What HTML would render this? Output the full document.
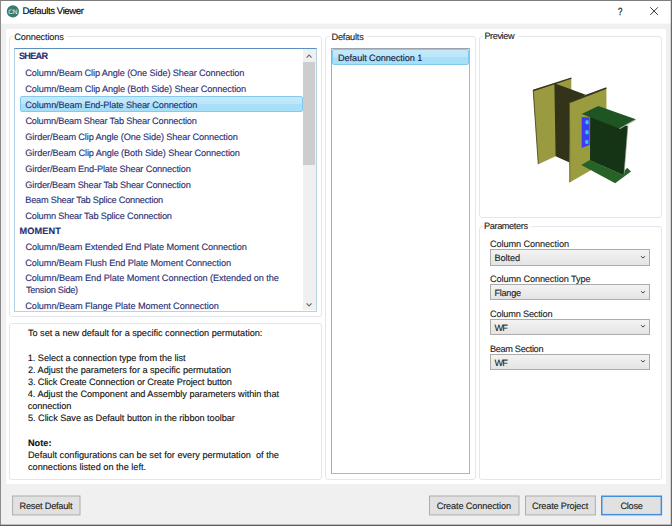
<!DOCTYPE html>
<html lang="en"><head><meta charset="utf-8"><title>Defaults Viewer</title>
<style>
html,body{margin:0;padding:0}
body{width:672px;height:526px;overflow:hidden;background:#f0f0f0;position:relative;font-family:"Liberation Sans", Arial, sans-serif;font-size:9.2px;line-height:12px;text-rendering:geometricPrecision}
.abs,.t,.gb,.btn,.cb{position:absolute;box-sizing:border-box}
.t{white-space:pre;line-height:12px;-webkit-text-stroke:0.12px currentColor}
.gb{border:1px solid #e1e7ed;border-radius:3px}
.lbl{position:absolute;background:#fff;height:3px}
.btn{background:#e1e1e1;border:1px solid #adadad}
.cb{border:1px solid #acacac;background:linear-gradient(#f3f3f3,#e4e4e4)}
.sel{border:1px solid #84c9ee;border-radius:2px;background:linear-gradient(#c4e9fb 0%,#bde6fa 48%,#a9e0f9 52%,#a6dff8 100%)}
</style></head><body>
<div class="abs" style="left:0;top:0;width:672px;height:23px;background:#fff"></div>
<svg class="abs" style="left:0;top:0" width="672" height="526" viewBox="0 0 672 526"><rect x="0" y="23" width="672" height="0.6" fill="#fff"/><rect x="0" y="0" width="672" height="1" fill="#7d7d7d"/><rect x="0" y="0" width="0.95" height="526" fill="#858585"/><rect x="670.7" y="0" width="1.3" height="526" fill="#8a8a8a"/><rect x="671.2" y="0" width="0.8" height="526" fill="#5e5e5e"/><rect x="0" y="524.5" width="672" height="1.5" fill="#8a8a8a"/><rect x="0" y="525" width="672" height="1" fill="#5e5e5e"/><circle cx="12.9" cy="11.4" r="6.1" fill="#3a7b70"/><text x="12.8" y="13.8" font-size="6.6" text-anchor="middle" fill="#eef6f3" font-family="Liberation Sans, sans-serif" letter-spacing="-0.2">CN</text><path d="M650.3 7.3 L657.9 14.9 M657.9 7.3 L650.3 14.9" stroke="#222" stroke-width="0.9" fill="none"/></svg>
<span class="t" style="left:617.8px;top:6px;font-size:10.5px;color:#222;-webkit-text-stroke:0.3px #222;transform:scaleX(0.74);transform-origin:0 0">?</span>
<span class="t" style="left:22.54px;top:6px;letter-spacing:-0.398px;color:#000;font-size:9.6px">Defaults Viewer</span>
<div class="abs" style="left:6px;top:29px;width:660px;height:454.7px;background:#fff"></div>
<div class="gb" style="left:9.3px;top:35.5px;width:313.0px;height:281.5px"></div>
<div class="lbl" style="left:13px;top:34.5px;width:53.5px"></div>
<div class="gb" style="left:9.3px;top:323px;width:313.0px;height:156.8px"></div>
<div class="gb" style="left:325.2px;top:35.5px;width:150.8px;height:444.3px"></div>
<div class="lbl" style="left:330px;top:34.5px;width:36.5px"></div>
<div class="gb" style="left:479px;top:35.5px;width:182.5px;height:182.1px"></div>
<div class="lbl" style="left:483px;top:34.5px;width:34.5px"></div>
<div class="gb" style="left:479px;top:225.8px;width:182.5px;height:254.0px"></div>
<div class="lbl" style="left:483px;top:224.8px;width:48px"></div>
<div class="abs" style="left:14.4px;top:47.6px;width:302.6px;height:264px;background:#fff;border:1px solid #b2d3ea;border-top-color:#5a8fc0"></div>
<div class="abs" style="left:302.6px;top:48.6px;width:13.2px;height:261.6px;background:#f0f0f0"></div>
<div class="abs" style="left:302.9px;top:62px;width:12.4px;height:102.7px;background:#cdcdcd"></div>
<svg class="abs" style="left:302px;top:48px" width="15" height="264" viewBox="0 0 15 264"><path d="M4.6 9.7 L7.1 7.1 L9.6 9.7" stroke="#686868" stroke-width="1.05" fill="none"/><path d="M4.6 255.3 L7.1 257.9 L9.6 255.3" stroke="#686868" stroke-width="1.05" fill="none"/></svg>
<div class="abs sel" style="left:19.8px;top:96px;width:283px;height:15.8px"></div>
<div class="abs" style="left:0;top:0;width:302px;height:310.6px;overflow:hidden">
<span class="t" style="left:18.90px;top:50px;letter-spacing:-0.743px;color:#292e72;font-weight:700">SHEAR</span>
<span class="t" style="left:25.34px;top:67px;letter-spacing:-0.125px;color:#292e72">Column/Beam Clip Angle (One Side) Shear Connection</span>
<span class="t" style="left:25.34px;top:83px;letter-spacing:-0.117px;color:#292e72">Column/Beam Clip Angle (Both Side) Shear Connection</span>
<span class="t" style="left:25.28px;top:99px;letter-spacing:-0.136px;color:#292e72">Column/Beam End-Plate Shear Connection</span>
<span class="t" style="left:25.40px;top:115px;letter-spacing:-0.192px;color:#292e72">Column/Beam Shear Tab Shear Connection</span>
<span class="t" style="left:25.34px;top:131px;letter-spacing:-0.136px;color:#292e72">Girder/Beam Clip Angle (One Side) Shear Connection</span>
<span class="t" style="left:25.34px;top:147px;letter-spacing:-0.121px;color:#292e72">Girder/Beam Clip Angle (Both Side) Shear Connection</span>
<span class="t" style="left:25.34px;top:163px;letter-spacing:-0.153px;color:#292e72">Girder/Beam End-Plate Shear Connection</span>
<span class="t" style="left:25.34px;top:179px;letter-spacing:-0.190px;color:#292e72">Girder/Beam Shear Tab Shear Connection</span>
<span class="t" style="left:25.34px;top:194px;letter-spacing:-0.225px;color:#292e72">Beam Shear Tab Splice Connection</span>
<span class="t" style="left:25.34px;top:210px;letter-spacing:-0.180px;color:#292e72">Column Shear Tab Splice Connection</span>
<span class="t" style="left:19.46px;top:225px;letter-spacing:0.098px;color:#292e72;font-weight:700">MOMENT</span>
<span class="t" style="left:25.40px;top:241px;letter-spacing:-0.112px;color:#292e72">Column/Beam Extended End Plate Moment Connection</span>
<span class="t" style="left:25.34px;top:257px;letter-spacing:-0.106px;color:#292e72">Column/Beam Flush End Plate Moment Connection</span>
<span class="t" style="left:25.28px;top:272px;letter-spacing:-0.080px;color:#292e72">Column/Beam End Plate Moment Connection (Extended on the</span>
<span class="t" style="left:25.88px;top:284px;letter-spacing:-0.288px;color:#292e72">Tension Side)</span>
<span class="t" style="left:25.34px;top:300px;letter-spacing:-0.090px;color:#292e72">Column/Beam Flange Plate Moment Connection</span>
</div>
<div class="abs" style="left:330.8px;top:47.6px;width:139.6px;height:426.6px;background:#fff;border:1px solid #b1b4ba;border-top-color:#9fa2a8;border-left-color:#a6a9af"></div>
<div class="abs sel" style="left:332.3px;top:49.2px;width:136.8px;height:15.4px"></div>
<div class="cb" style="left:489.8px;top:249.1px;width:160.4px;height:16.6px"></div>
<svg class="abs" style="left:639px;top:254.7px" width="8" height="6" viewBox="0 0 8 6"><path d="M2.1 1.2 L4 3.1 L5.9 1.2" stroke="#3c3c3c" stroke-width="1" fill="none"/></svg>
<div class="cb" style="left:489.8px;top:283.9px;width:160.4px;height:16.6px"></div>
<svg class="abs" style="left:639px;top:289.5px" width="8" height="6" viewBox="0 0 8 6"><path d="M2.1 1.2 L4 3.1 L5.9 1.2" stroke="#3c3c3c" stroke-width="1" fill="none"/></svg>
<div class="cb" style="left:489.8px;top:318.8px;width:160.4px;height:16.6px"></div>
<svg class="abs" style="left:639px;top:324.40000000000003px" width="8" height="6" viewBox="0 0 8 6"><path d="M2.1 1.2 L4 3.1 L5.9 1.2" stroke="#3c3c3c" stroke-width="1" fill="none"/></svg>
<div class="cb" style="left:489.8px;top:353.7px;width:160.4px;height:16.6px"></div>
<svg class="abs" style="left:639px;top:359.3px" width="8" height="6" viewBox="0 0 8 6"><path d="M2.1 1.2 L4 3.1 L5.9 1.2" stroke="#3c3c3c" stroke-width="1" fill="none"/></svg>
<svg class="abs" style="left:0;top:490px" width="672" height="30" viewBox="0 490 672 30"><rect x="12.6" y="496.0" width="67.4" height="18.899999999999977" fill="#e1e1e1" stroke="#adadad" stroke-width="1"/><rect x="429.5" y="496.0" width="89.5" height="18.899999999999977" fill="#e1e1e1" stroke="#adadad" stroke-width="1"/><rect x="525.5" y="496.0" width="69.79999999999995" height="18.899999999999977" fill="#e1e1e1" stroke="#adadad" stroke-width="1"/><rect x="601.75" y="496.25" width="59.60000000000002" height="18.399999999999977" fill="#e1e1e1" stroke="#3f8fdb" stroke-width="1.5"/></svg>
<svg class="abs" style="left:522px;top:66px" width="130" height="135" viewBox="522 66 130 135">
<!-- back flange -->
<polygon points="533,90 571.3,77.7 571.3,120 555.6,156.3 538.3,164.3" fill="#9a9a40"/>
<polyline points="538.3,164.2 533.2,90.3" fill="none" stroke="#3b3b22" stroke-width="0.8"/><polygon points="532.9,89.8 571.3,77.5 571.5,78.8 533.4,91.2" fill="#35351d"/>
<!-- web -->
<polygon points="554.4,83.3 585.8,94.8 571,102 569.5,162.4 555.6,156.3" fill="#33331a"/>
<!-- front flange -->
<polygon points="569.3,102 606.4,88 606.5,160 589.6,171 569.6,182.5" fill="#9b9b40"/>
<polygon points="569,101 606.2,87.2 606.7,88.8 569.9,103" fill="#35351d"/>
<polyline points="569.5,102 569.8,182.3" fill="none" stroke="#4a4a28" stroke-width="0.7"/>
<!-- shear tab -->
<polygon points="581.7,117 589.6,117.4 589.2,145 581.7,148" fill="#3c3cf2"/>
<polygon points="589.2,117.4 590.6,117.6 590.4,145 589.1,145.4" fill="#e0305a"/>
<ellipse cx="587.1" cy="122.2" rx="1.8" ry="2.2" fill="#3cbdea"/>
<ellipse cx="587" cy="132.2" rx="1.8" ry="2.2" fill="#3cbdea"/>
<ellipse cx="586.8" cy="141.9" rx="1.8" ry="2.2" fill="#3cbdea"/>
<!-- beam web -->
<polygon points="590.2,116 627.8,126 623.8,175.4 590,160.2" fill="#153416"/>
<!-- beam bottom flange -->
<polygon points="581.3,164.9 589.8,160 623.7,175.2 624.6,170.4 627.2,167.8 631,171.4 615.2,183.2" fill="#256327"/>
<!-- beam top flange -->
<polygon points="581.7,113.9 598.3,105.9 635.8,119.2 619.3,128.4" fill="#1f5423"/>
<polygon points="619.3,128.3 635.8,119.1 636,119.9 619.6,129.2" fill="#a9b2a9"/>
<polyline points="627.9,125.6 624,174.8" fill="none" stroke="#7f8d7f" stroke-width="0.6"/>
</svg>

<span class="t" style="left:14.30px;top:31px;letter-spacing:-0.158px;color:#1b1b1b">Connections</span>
<span class="t" style="left:331.50px;top:31px;letter-spacing:-0.203px;color:#1b1b1b">Defaults</span>
<span class="t" style="left:484.40px;top:30px;letter-spacing:-0.415px;color:#1b1b1b">Preview</span>
<span class="t" style="left:484.00px;top:220px;letter-spacing:-0.389px;color:#1b1b1b">Parameters</span>
<span class="t" style="left:27.98px;top:327px;letter-spacing:-0.035px;color:#111">To set a new default for a specific connection permutation:</span>
<span class="t" style="left:27.80px;top:352px;letter-spacing:-0.064px;color:#111">1. Select a connection type from the list</span>
<span class="t" style="left:27.98px;top:364px;letter-spacing:-0.033px;color:#111">2. Adjust the parameters for a specific permutation</span>
<span class="t" style="left:27.98px;top:376px;letter-spacing:-0.108px;color:#111">3. Click Create Connection or Create Project button</span>
<span class="t" style="left:27.80px;top:388px;letter-spacing:-0.035px;color:#111">4. Adjust the Component and Assembly parameters within that</span>
<span class="t" style="left:27.80px;top:400px;letter-spacing:-0.106px;color:#111">connection</span>
<span class="t" style="left:27.98px;top:412px;letter-spacing:-0.047px;color:#111">5. Click Save as Default button in the ribbon toolbar</span>
<span class="t" style="left:27.98px;top:437px;letter-spacing:0.009px;color:#111;font-weight:700">Note:</span>
<span class="t" style="left:27.98px;top:449px;letter-spacing:-0.005px;color:#111">Default configurations can be set for every permutation  of the</span>
<span class="t" style="left:27.98px;top:461px;letter-spacing:-0.013px;color:#111">connections listed on the left.</span>
<span class="t" style="left:338.02px;top:52px;letter-spacing:-0.074px;color:#1a1a40">Default Connection 1</span>
<span class="t" style="left:490.00px;top:238px;letter-spacing:-0.100px;color:#1b1b1b">Column Connection</span>
<span class="t" style="left:490.00px;top:273px;letter-spacing:-0.119px;color:#1b1b1b">Column Connection Type</span>
<span class="t" style="left:490.00px;top:308px;letter-spacing:-0.181px;color:#1b1b1b">Column Section</span>
<span class="t" style="left:490.00px;top:343px;letter-spacing:-0.337px;color:#1b1b1b">Beam Section</span>
<span class="t" style="left:494.50px;top:252px;letter-spacing:-0.092px;color:#1b1b1b">Bolted</span>
<span class="t" style="left:494.50px;top:287px;letter-spacing:-0.299px;color:#1b1b1b">Flange</span>
<span class="t" style="left:494.50px;top:322px;letter-spacing:-0.800px;color:#1b1b1b">WF</span>
<span class="t" style="left:494.50px;top:357px;letter-spacing:-0.800px;color:#1b1b1b">WF</span>
<span class="t" style="left:19.50px;top:500px;letter-spacing:-0.223px;color:#1b1b1b">Reset Default</span>
<span class="t" style="left:436.70px;top:500px;letter-spacing:-0.144px;color:#1b1b1b">Create Connection</span>
<span class="t" style="left:532.00px;top:500px;letter-spacing:-0.195px;color:#1b1b1b">Create Project</span>
<span class="t" style="left:620.42px;top:500px;letter-spacing:-0.265px;color:#1b1b1b">Close</span>
</body></html>
